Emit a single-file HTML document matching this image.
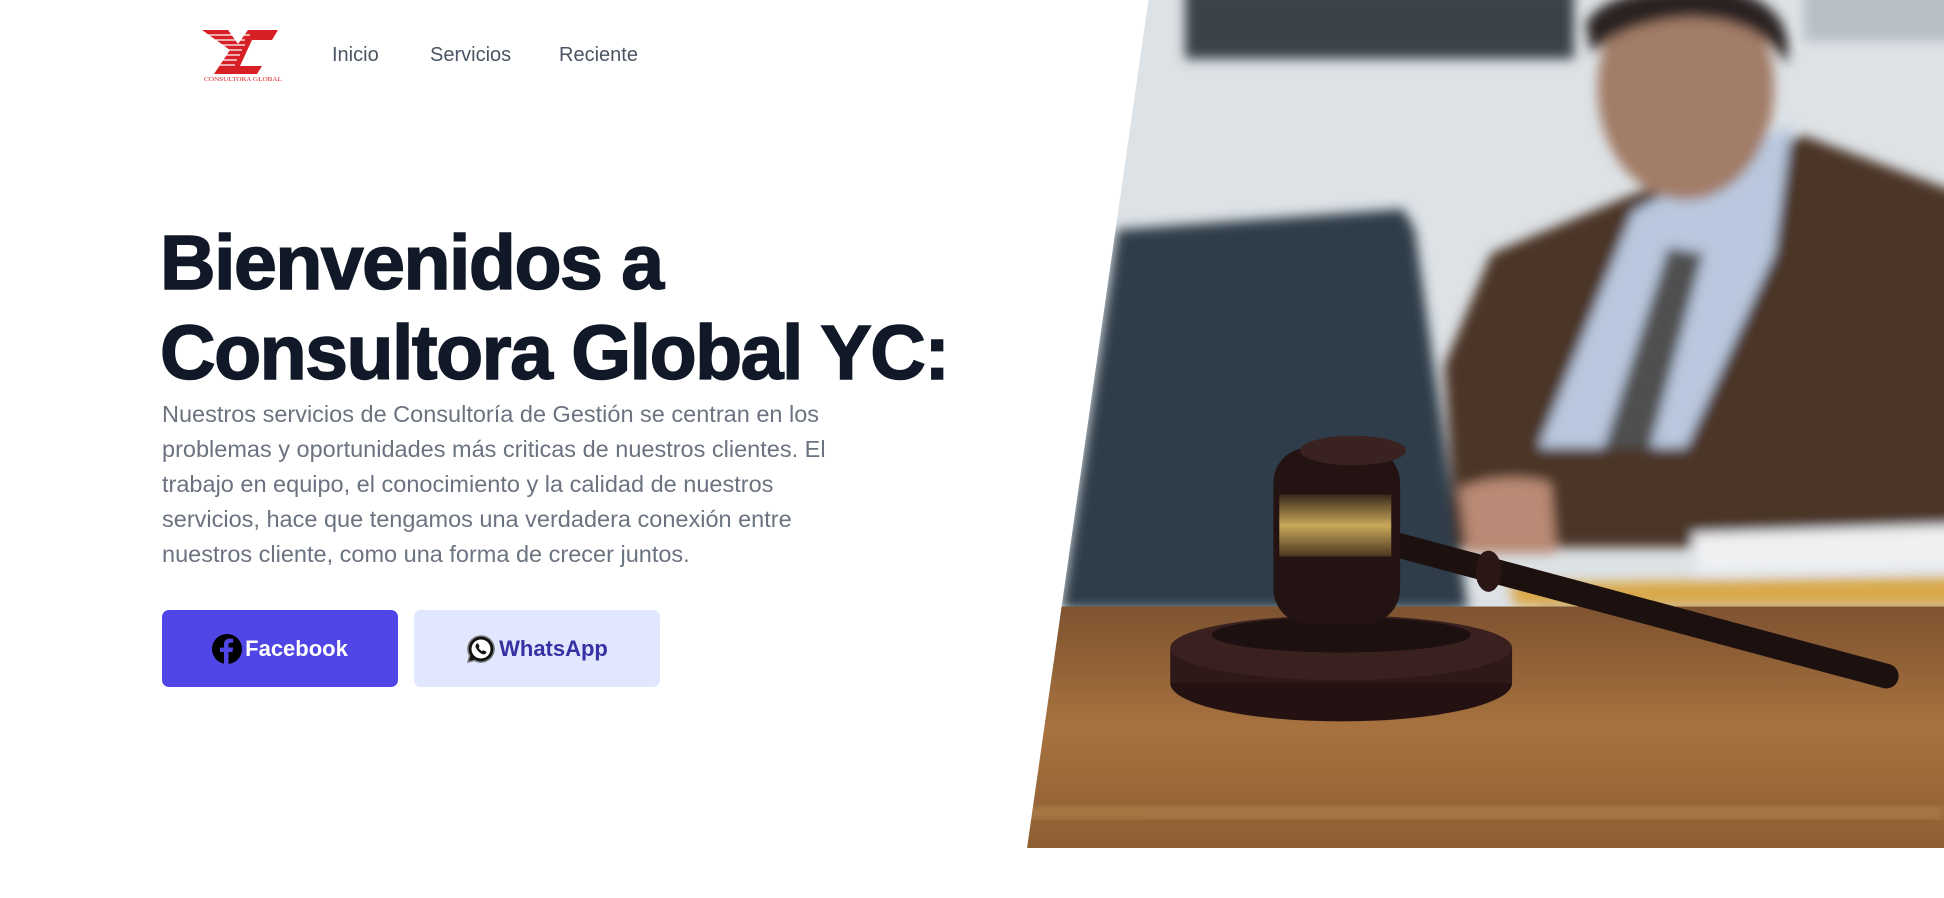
<!DOCTYPE html>
<html><head><meta charset="utf-8"><style>
*{margin:0;padding:0;box-sizing:border-box}
body{width:1944px;height:898px;background:#fff;position:relative;overflow:hidden;font-family:"Liberation Sans",sans-serif}
.nav a{position:absolute;top:44px;font-size:20px;color:#4b5563;text-decoration:none;font-weight:500}
h1{position:absolute;left:160px;top:218px;font-size:77px;line-height:90px;font-weight:900;color:#111827;letter-spacing:-1.5px;-webkit-text-stroke:1.5px #111827}
p{position:absolute;left:162px;top:397px;width:705px;font-size:23.5px;line-height:35px;color:#6b7280}
.btn{position:absolute;top:610px;height:77px;border-radius:7px;display:flex;align-items:center;justify-content:center;font-size:22px;font-weight:bold;gap:3px}
</style></head><body>
<svg style="position:absolute;left:200px;top:28px" width="86" height="54" viewBox="0 0 86 54">
<polygon points="2,2 28,2 38,16 48,2 78,2 72,12 52,12 40,38 62,38 57,46 14,46 30,22" fill="#d71f26"/>
<g stroke="#fff" stroke-width="1.3"><line x1="0" y1="7" x2="50" y2="7"/><line x1="0" y1="12" x2="45" y2="12"/><line x1="10" y1="17" x2="45" y2="17"/><line x1="10" y1="22" x2="42" y2="22"/><line x1="10" y1="27" x2="40" y2="27"/><line x1="10" y1="32" x2="37" y2="32"/><line x1="10" y1="37" x2="35" y2="37"/></g>
<text x="43" y="53" font-family="Liberation Serif" font-size="6.3" fill="#d71f26" text-anchor="middle" textLength="78" lengthAdjust="spacingAndGlyphs">CONSULTORA GLOBAL</text>
</svg>
<div class="nav"><a style="left:332px">Inicio</a><a style="left:430px">Servicios</a><a style="left:559px">Reciente</a></div>
<h1>Bienvenidos a<br>Consultora Global YC:</h1>
<p>Nuestros servicios de Consultoría de Gestión se centran en los problemas y oportunidades más criticas de nuestros clientes. El trabajo en equipo, el conocimiento y la calidad de nuestros servicios, hace que tengamos una verdadera conexión entre nuestros cliente, como una forma de crecer juntos.</p>
<div class="btn" style="left:162px;width:236px;background:#4f46e5;color:#fff"><svg width="30" height="30" viewBox="0 0 30 30"><circle cx="15" cy="15" r="15" fill="#000"/><path d="M16.5 30V18h4l.6-4.5h-4.6v-2.6c0-1.3.4-2.2 2.2-2.2h2.5V4.8c-.4-.1-1.900-.2-3.600-.2-3.6 0-5.6 2.1-5.6 6v3h-4V18h4v12z" fill="#4f46e5"/></svg>Facebook</div>
<div class="btn" style="left:414px;width:246px;background:#e0e7ff;color:#3730a3"><svg width="30" height="30" viewBox="0 0 30 30"><path d="M15 2a13 13 0 0 0-11.2 19.6L2 28l6.6-1.7A13 13 0 1 0 15 2z" fill="#111" stroke="#777" stroke-width="1.5"/><circle cx="15" cy="15" r="9.5" fill="#fff"/><path d="M11 9.5c.6-.4 1.3 0 1.6.8l.8 2c.2.5-.3 1-.7 1.4.7 1.5 1.9 2.7 3.4 3.4.4-.4.9-.9 1.4-.7l2 .8c.8.3 1.2 1 .8 1.6-.8 1.5-2.6 2-4.2 1.2-2.8-1.3-4.9-3.4-6.2-6.2-.8-1.6-.3-3.4 1.100-4.3z" fill="#111"/></svg>WhatsApp</div>
<svg style="position:absolute;left:1020px;top:0" width="924" height="848" viewBox="0 0 1568 1440" preserveAspectRatio="none">
<defs>
<clipPath id="c"><polygon points="218,0 1568,0 1568,1440 12,1440"/></clipPath>
<filter id="b" x="-10%" y="-10%" width="120%" height="120%"><feGaussianBlur stdDeviation="10"/></filter>
<linearGradient id="w" x1="0" y1="0" x2="0" y2="1"><stop offset="0" stop-color="#7e5330"/><stop offset=".5" stop-color="#a7723f"/><stop offset="1" stop-color="#8e5e33"/></linearGradient>
<linearGradient id="g" x1="0" y1="0" x2="0" y2="1"><stop offset="0" stop-color="#3a2a1c"/><stop offset=".5" stop-color="#c9a85a"/><stop offset="1" stop-color="#4a3620"/></linearGradient>
</defs>
<g clip-path="url(#c)">
<rect width="1568" height="1440" fill="#dde2e6"/>
<g filter="url(#b)">
<rect x="280" y="-20" width="660" height="120" fill="#3a4249"/>
<rect x="1330" y="-20" width="260" height="90" fill="#b8c0c6"/>
<polygon points="165,390 650,355 670,390 760,1035 70,1035" fill="#2e3c48"/>
<polygon points="720,620 800,430 1040,330 1330,230 1600,330 1600,930 740,930" fill="#4b3427"/>
<polygon points="1040,360 1310,210 1280,430 1130,760 880,760" fill="#b9c8de"/>
<polygon points="1100,420 1160,430 1070,760 990,760" fill="#4f4f50"/>
<ellipse cx="1130" cy="150" rx="150" ry="190" fill="#a27d68"/>
<path d="M960 40 Q1000 -30 1200 -20 Q1320 10 1300 110 Q1260 30 1130 30 Q1020 40 970 90z" fill="#2b2320"/>
<path d="M745 830 Q820 800 900 820 L910 940 L760 940z" fill="#b98a74"/>
<polygon points="1140,905 1600,890 1600,965 1150,975" fill="#eef0f2"/>
<polygon points="830,990 1600,980 1600,1030 840,1030" fill="#d9a84a"/>
<rect x="880" y="1040" width="720" height="35" fill="#2e3a44"/>
</g>
<rect x="0" y="1030" width="1568" height="410" fill="url(#w)"/>
<rect x="0" y="1370" width="1568" height="20" fill="#c89a62" opacity=".5" filter="url(#b)"/>
<ellipse cx="545" cy="1160" rx="290" ry="65" fill="#241212"/>
<rect x="255" y="1100" width="580" height="60" fill="#2e1918"/>
<ellipse cx="545" cy="1100" rx="290" ry="55" fill="#3a2120"/>
<ellipse cx="545" cy="1078" rx="220" ry="30" fill="#1c1010"/>
<line x1="620" y1="920" x2="1470" y2="1148" stroke="#1d1110" stroke-width="42" stroke-linecap="round"/>
<ellipse cx="795" cy="970" rx="22" ry="35" fill="#2a1614"/>
<rect x="430" y="760" width="215" height="300" rx="60" fill="#231312"/>
<rect x="440" y="840" width="190" height="105" fill="url(#g)"/>
<ellipse cx="565" cy="765" rx="90" ry="25" fill="#3a2220"/>
</g>
</svg>
</body></html>
